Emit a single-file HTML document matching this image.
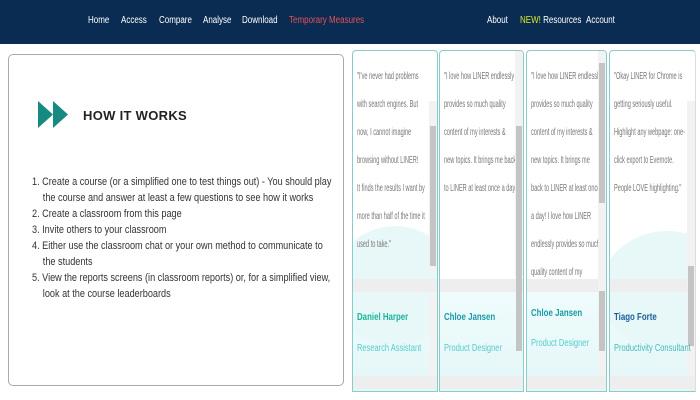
<!DOCTYPE html>
<html><head><meta charset="utf-8"><style>
*{margin:0;padding:0;box-sizing:border-box}
body{width:700px;height:400px;overflow:hidden;background:#fff;font-family:"Liberation Sans",sans-serif;position:relative}
.nav{position:absolute;left:0;top:0;width:700px;height:44px;background:#0b2c52}
.nav span{position:absolute;top:15px;font-size:10px;color:#fff;white-space:nowrap;transform:scaleX(.8);transform-origin:left}
.panel{position:absolute;left:8px;top:54px;width:336px;height:332px;border:1px solid #aaa;border-radius:5px}
.title{position:absolute;left:83px;top:108px;font-size:13px;font-weight:bold;color:#222;letter-spacing:.3px}
ol{position:absolute;left:32px;top:174px;width:362px;font-size:11px;color:#333;line-height:16px;list-style:none;transform:scaleX(.83);transform-origin:left top}
ol li{padding-left:13px;text-indent:-13px}
.card{position:absolute;top:50px;height:342px;border:1px solid #8cc;border-radius:4px 4px 0 0;overflow:hidden;background:#fff}
.clip{position:absolute;left:0;top:0;right:8px;height:226px;overflow:hidden}
.txt{position:absolute;left:4px;top:12px;font-size:10px;color:#777;line-height:28px;white-space:nowrap;transform:scaleX(.56);transform-origin:left top}
.low{position:absolute;left:0;right:0;top:240px;bottom:0;background:linear-gradient(#f0fcfc,#e4f6f8)}
.wave{position:absolute;left:-20px;right:-20px;top:178px;height:120px;border-radius:50%;background:#e8f8f8}
.hb{position:absolute;left:0;right:0;height:13px;background:#eee}
.vb{position:absolute;right:0;width:8px;background:#f2f2f2}
.th{position:absolute;right:1px;width:6px;background:#c4c4c4}
.name{position:absolute;left:4px;top:260px;font-size:10.5px;font-weight:bold;white-space:nowrap;transform:scaleX(.75);transform-origin:left}
.role{position:absolute;left:4px;top:292px;font-size:10px;color:#5cc;white-space:nowrap;transform:scaleX(.75);transform-origin:left}
</style></head><body>
<div class="nav">
<span style="left:88px">Home</span><span style="left:121px">Access</span><span style="left:159px">Compare</span><span style="left:203px">Analyse</span><span style="left:242px">Download</span><span style="left:289px;color:#e5505a">Temporary Measures</span>
<span style="left:487px">About</span><span style="left:520px"><b style="color:#d8e830;font-weight:normal">NEW!</b> Resources</span><span style="left:586px">Account</span>
</div>
<div class="panel"></div>
<svg style="position:absolute;left:38px;top:101px" width="32" height="27"><polygon points="0,0 15,13.5 0,27" fill="#168a80"/><polygon points="15,0 30,13.5 15,27" fill="#168a80"/></svg>
<div class="title">HOW IT WORKS</div>
<ol>
<li>1. Create a course (or a simplified one to test things out) - You should play the course and answer at least a few questions to see how it works</li>
<li>2. Create a classroom from this page</li>
<li>3. Invite others to your classroom</li>
<li>4. Either use the classroom chat or your own method to communicate to the students</li>
<li>5. View the reports screens (in classroom reports) or, for a simplified view, look at the course leaderboards</li>
</ol>

<div class="card" style="left:352px;width:86px">
<div class="low"></div><div class="wave" style="top:175px"></div>
<div class="clip"><div class="txt">"I've never had problems<br>with search engines. But<br>now, I cannot imagine<br>browsing without LINER!<br>It finds the results I want by<br>more than half of the time it<br>used to take."</div></div>
<div class="hb" style="top:228px"></div>
<div class="vb" style="top:50px;height:170px"></div><div class="vb" style="top:242px;height:85px"></div><div class="th" style="top:75px;height:140px"></div>
<div class="name" style="color:#1ab59a">Daniel Harper</div><div class="role">Research Assistant</div>
<div class="hb" style="top:325px"></div>
</div>
<div class="card" style="left:439px;width:85px">
<div class="low"></div><div class="wave" style="top:130px;left:10px;right:10px;height:65px;background:#fff"></div>
<div class="clip"><div class="txt">"I love how LINER endlessly<br>provides so much quality<br>content of my interests &amp;<br>new topics. It brings me back<br>to LINER at least once a day!"</div></div>
<div class="hb" style="top:228px"></div>
<div class="vb" style="top:0;height:225px"></div><div class="th" style="top:75px;height:225px"></div>
<div class="name" style="color:#1a9aa8">Chloe Jansen</div><div class="role">Product Designer</div>
<div class="hb" style="top:325px"></div>
</div>
<div class="card" style="left:526px;width:81px">
<div class="low"></div><div class="wave" style="top:150px;height:80px;background:#fff"></div>
<div class="clip"><div class="txt">"I love how LINER endlessly<br>provides so much quality<br>content of my interests &amp;<br>new topics. It brings me<br>back to LINER at least once<br>a day! I love how LINER<br>endlessly provides so much<br>quality content of my</div></div>
<div class="hb" style="top:228px"></div>
<div class="vb" style="top:0;height:325px"></div><div class="th" style="top:12px;height:140px"></div><div class="th" style="top:240px;height:60px"></div>
<div class="name" style="color:#1a9aa8;top:256px">Chloe Jansen</div><div class="role" style="top:287px">Product Designer</div>
<div class="hb" style="top:325px"></div>
</div>
<div class="card" style="left:609px;width:87px;border-right-color:#ddd">
<div class="low"></div><div class="wave" style="top:180px;left:-10px;right:-40px"></div>
<div class="clip"><div class="txt">"Okay LINER for Chrome is<br>getting seriously useful.<br>Highlight any webpage: one-<br>click export to Evernote.<br>People LOVE highlighting."</div></div>
<div class="hb" style="top:228px"></div>
<div class="vb" style="top:50px;height:275px"></div><div class="th" style="top:215px;height:80px"></div>
<div class="name" style="color:#1a5e98">Tiago Forte</div><div class="role" style="color:#4bb">Productivity Consultant</div>
<div class="hb" style="top:325px"></div>
</div>
</body></html>
